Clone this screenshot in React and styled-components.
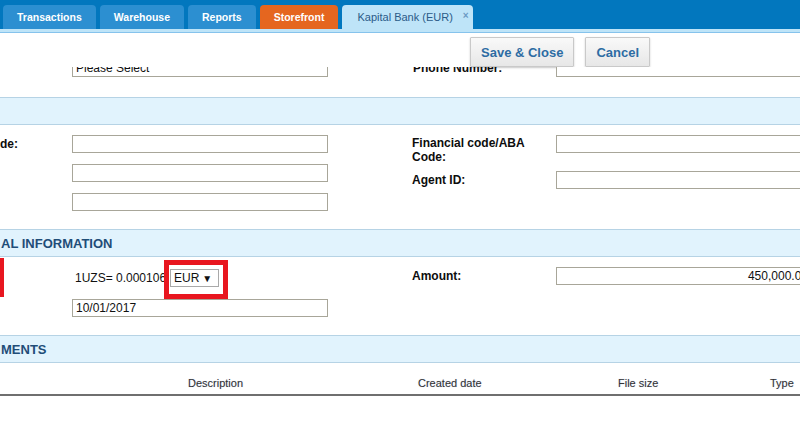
import React from 'react';
import styled, { createGlobalStyle } from 'styled-components';

const GlobalStyle = createGlobalStyle`
  html, body {
    margin: 0;
    padding: 0;
    background: #ffffff;
    overflow: hidden;
  }
  body {
    font-family: 'Liberation Sans', Arial, sans-serif;
    color: #111111;
  }
  * {
    box-sizing: border-box;
  }
`;

const Page = styled.div`
  width: 800px;
  height: 434px;
  overflow: hidden;
  display: flex;
  flex-direction: column;
  background: #ffffff;
`;

const TabBar = styled.div`
  height: 29px;
  flex: none;
  display: flex;
  align-items: flex-end;
  gap: 4px;
  padding-left: 3px;
  background: #0277be;
`;

const Tab = styled.div`
  height: 24px;
  display: flex;
  align-items: center;
  padding: ${p => (p.active ? '0 4px 0 15px' : '0 14px')};
  border-radius: 4px 4px 0 0;
  font-size: ${p => (p.active ? '11px' : '10.5px')};
  font-weight: ${p => (p.active ? 400 : 700)};
  color: ${p => (p.active ? '#2b5b88' : '#ffffff')};
  background: ${p => (p.active ? '#bee4f8' : p.accent ? '#e5661f' : '#2c8fd1')};
  white-space: nowrap;
`;

const TabClose = styled.span`
  align-self: flex-start;
  margin: 5px 0 0 10px;
  font-size: 10px;
  font-weight: 700;
  color: #6b9ac4;
`;

const TabStrip = styled.div`
  height: 4px;
  flex: none;
  background: #bee4f8;
  border-bottom: 1px solid #86c3ec;
`;

const Toolbar = styled.div`
  height: 34px;
  flex: none;
  display: flex;
  align-items: flex-start;
  gap: 11px;
  padding: 4px 0 0 470px;
  background: #ffffff;
`;

const Button = styled.button`
  height: 30px;
  padding: 0 ${p => p.pad || 10}px;
  border: 1px solid #c9c9c9;
  border-radius: 1px;
  background: linear-gradient(#f9f9f9, #e7e7e7);
  box-shadow: 0 1px 2px rgba(0, 0, 0, 0.22);
  font-family: 'Liberation Sans', Arial, sans-serif;
  font-size: 13px;
  font-weight: 700;
  color: #2d6ca3;
  cursor: pointer;
`;

const Viewport = styled.div`
  flex: 1;
  overflow: hidden;
`;

const Scrolled = styled.div`
  width: 812px;
  margin-top: -8px;
`;

const Body = styled.div`
  display: flex;
  height: ${p => (p.h ? `${p.h}px` : 'auto')};
  padding-bottom: ${p => p.pb || 0}px;
`;

const Half = styled.div`
  width: ${p => (p.right ? 400 : 412)}px;
  display: flex;
  flex-direction: column;
  gap: ${p => p.gap || 0}px;
  padding-top: ${p => p.pt || 0}px;
`;

const FieldRow = styled.div`
  display: grid;
  grid-template-columns: ${p => (p.right ? '144px' : '72px')} 256px;
  align-items: ${p => p.align || 'center'};
  min-height: 18px;
`;

const Label = styled.div`
  font-size: 12px;
  font-weight: 700;
  line-height: 14px;
  color: #0d0d0d;
  padding-left: ${p => p.indent || 0}px;
  padding-top: ${p => p.top || 0}px;
`;

const Input = styled.div`
  height: 18px;
  border: 1px solid #a8a699;
  background: #ffffff;
  font-size: 12px;
  line-height: 16px;
  padding: 0 3px;
  color: #111111;
  text-align: ${p => (p.alignRight ? 'right' : 'left')};
  white-space: nowrap;
  overflow: hidden;
`;

const Band = styled.div`
  height: 28px;
  display: flex;
  align-items: center;
  padding-left: 1px;
  background: #e1f3fd;
  border-top: 1px solid #b6d3e5;
  border-bottom: 1px solid #b6d3e5;
  font-size: 13px;
  font-weight: 700;
  color: #1f4d78;
`;

const MarkerCell = styled.div`
  width: 72px;
  padding-top: 1px;
`;

const Marker = styled.div`
  width: 4px;
  height: 39px;
  background: #e8161f;
`;

const FieldStack = styled.div`
  width: 256px;
  display: flex;
  flex-direction: column;
  gap: 12px;
  padding-top: 12px;
`;

const RateRow = styled.div`
  height: 18px;
  display: flex;
  align-items: center;
`;

const RateText = styled.span`
  padding-left: 3px;
  font-size: 12px;
  color: #111111;
  white-space: nowrap;
`;

const Picker = styled.div`
  position: relative;
  margin-left: 4px;
`;

const SelectBox = styled.div`
  width: 49px;
  height: 18px;
  display: flex;
  align-items: center;
  justify-content: space-between;
  padding: 0 6px 0 3px;
  border: 1px solid #a9a9a9;
  background: #ffffff;
  font-size: 12px;
  color: #111111;
`;

const Caret = styled.span`
  font-size: 10px;
  color: #111111;
`;

const Highlight = styled.div`
  position: absolute;
  left: -6px;
  top: -9px;
  width: 64px;
  height: 39px;
  border: 5px solid #e8161f;
  pointer-events: none;
`;

const TableHead = styled.div`
  height: 33px;
  display: grid;
  grid-template-columns: 188px 230px 200px 152px 1fr;
  align-items: end;
  padding-bottom: 5px;
  border-bottom: 2px solid #6f6f6f;
`;

const HeadCell = styled.div`
  font-size: 11px;
  color: #333333;
  text-shadow: 0 0 1px rgba(110, 130, 190, 0.45);
  white-space: nowrap;
`;

export default function App() {
  return (
    <>
      <GlobalStyle />
      <Page>
        <TabBar>
          <Tab>Transactions</Tab>
          <Tab>Warehouse</Tab>
          <Tab>Reports</Tab>
          <Tab accent>Storefront</Tab>
          <Tab active>
            Kapital Bank (EUR)
            <TabClose>×</TabClose>
          </Tab>
        </TabBar>
        <TabStrip />
        <Toolbar>
          <Button>Save &amp; Close</Button>
          <Button>Cancel</Button>
        </Toolbar>

        <Viewport>
          <Scrolled>
            <Body pb={20}>
              <Half>
                <FieldRow>
                  <span />
                  <Input>Please Select</Input>
                </FieldRow>
              </Half>
              <Half right>
                <FieldRow right>
                  <Label indent={1}>Phone Number:</Label>
                  <Input />
                </FieldRow>
              </Half>
            </Body>

            <Band />

            <Body h={104}>
              <Half pt={10} gap={11}>
                <FieldRow>
                  <Label>de:</Label>
                  <Input />
                </FieldRow>
                <FieldRow>
                  <span />
                  <Input />
                </FieldRow>
                <FieldRow>
                  <span />
                  <Input />
                </FieldRow>
              </Half>
              <Half right pt={10} gap={7}>
                <FieldRow right align="start">
                  <Label top={1}>
                    Financial code/ABA
                    <br />
                    Code:
                  </Label>
                  <Input />
                </FieldRow>
                <FieldRow right>
                  <Label>Agent ID:</Label>
                  <Input />
                </FieldRow>
              </Half>
            </Body>

            <Band>AL INFORMATION</Band>

            <Body h={78}>
              <Half>
                <Body>
                  <MarkerCell>
                    <Marker />
                  </MarkerCell>
                  <FieldStack>
                    <RateRow>
                      <RateText>1UZS= 0.000106</RateText>
                      <Picker>
                        <SelectBox>
                          EUR <Caret>▼</Caret>
                        </SelectBox>
                        <Highlight />
                      </Picker>
                    </RateRow>
                    <Input>10/01/2017</Input>
                  </FieldStack>
                </Body>
              </Half>
              <Half right pt={10}>
                <FieldRow right>
                  <Label>Amount:</Label>
                  <Input alignRight>450,000.00</Input>
                </FieldRow>
              </Half>
            </Body>

            <Band>MENTS</Band>

            <TableHead>
              <span />
              <HeadCell>Description</HeadCell>
              <HeadCell>Created date</HeadCell>
              <HeadCell>File size</HeadCell>
              <HeadCell>Type</HeadCell>
            </TableHead>
          </Scrolled>
        </Viewport>
      </Page>
    </>
  );
}
